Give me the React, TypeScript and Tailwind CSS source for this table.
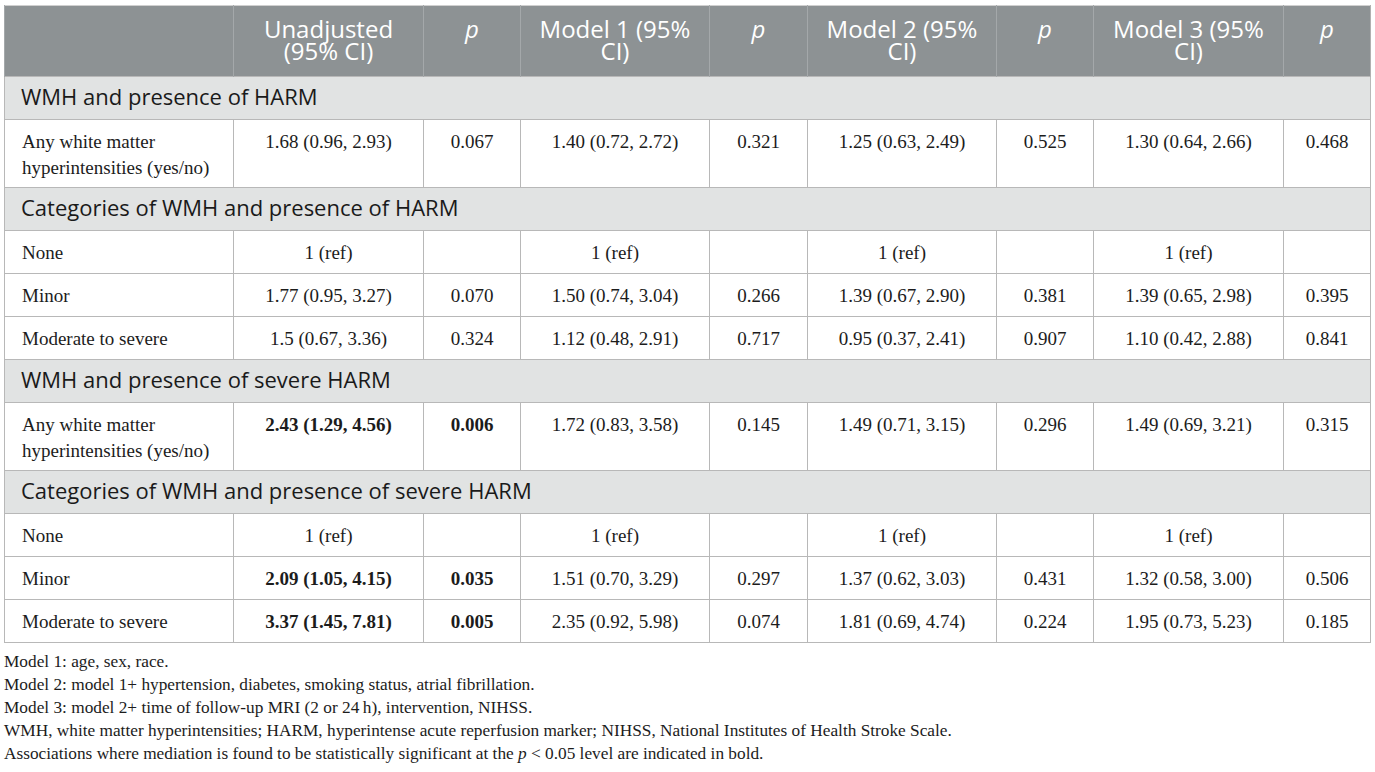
import React from "react";

type Cell = { v: string; b?: boolean };
type Row =
  | { kind: "section"; label: string }
  | { kind: "data"; label: React.ReactNode; two?: boolean; cells: Cell[] };

const c = (v: string, b?: boolean): Cell => ({ v, b });

const rows: Row[] = [
  { kind: "section", label: "WMH and presence of HARM" },
  {
    kind: "data",
    two: true,
    label: (
      <>
        Any white matter
        <br />
        hyperintensities (yes/no)
      </>
    ),
    cells: [c("1.68 (0.96, 2.93)"), c("0.067"), c("1.40 (0.72, 2.72)"), c("0.321"), c("1.25 (0.63, 2.49)"), c("0.525"), c("1.30 (0.64, 2.66)"), c("0.468")],
  },
  { kind: "section", label: "Categories of WMH and presence of HARM" },
  { kind: "data", label: "None", cells: [c("1 (ref)"), c(""), c("1 (ref)"), c(""), c("1 (ref)"), c(""), c("1 (ref)"), c("")] },
  { kind: "data", label: "Minor", cells: [c("1.77 (0.95, 3.27)"), c("0.070"), c("1.50 (0.74, 3.04)"), c("0.266"), c("1.39 (0.67, 2.90)"), c("0.381"), c("1.39 (0.65, 2.98)"), c("0.395")] },
  { kind: "data", label: "Moderate to severe", cells: [c("1.5 (0.67, 3.36)"), c("0.324"), c("1.12 (0.48, 2.91)"), c("0.717"), c("0.95 (0.37, 2.41)"), c("0.907"), c("1.10 (0.42, 2.88)"), c("0.841")] },
  { kind: "section", label: "WMH and presence of severe HARM" },
  {
    kind: "data",
    two: true,
    label: (
      <>
        Any white matter
        <br />
        hyperintensities (yes/no)
      </>
    ),
    cells: [c("2.43 (1.29, 4.56)", true), c("0.006", true), c("1.72 (0.83, 3.58)"), c("0.145"), c("1.49 (0.71, 3.15)"), c("0.296"), c("1.49 (0.69, 3.21)"), c("0.315")],
  },
  { kind: "section", label: "Categories of WMH and presence of severe HARM" },
  { kind: "data", label: "None", cells: [c("1 (ref)"), c(""), c("1 (ref)"), c(""), c("1 (ref)"), c(""), c("1 (ref)"), c("")] },
  { kind: "data", label: "Minor", cells: [c("2.09 (1.05, 4.15)", true), c("0.035", true), c("1.51 (0.70, 3.29)"), c("0.297"), c("1.37 (0.62, 3.03)"), c("0.431"), c("1.32 (0.58, 3.00)"), c("0.506")] },
  { kind: "data", label: "Moderate to severe", cells: [c("3.37 (1.45, 7.81)", true), c("0.005", true), c("2.35 (0.92, 5.98)"), c("0.074"), c("1.81 (0.69, 4.74)"), c("0.224"), c("1.95 (0.73, 5.23)"), c("0.185")] },
];

const widths = [229, 190, 97, 189, 98, 189, 97, 190, 87];

const sans = "font-['Open_Sans',_'Noto_Sans',_sans-serif]";
const serif = "font-['Liberation_Serif',_'Times_New_Roman',_serif]";

function HeadCell({ children, last }: { children?: React.ReactNode; last?: boolean }) {
  return (
    <th
      className={`h-[71px] align-top pt-[12px] px-1 text-center font-normal text-white text-[24px] leading-[22px] border-l border-[#a4a8aa] ${last ? "border-r border-r-[#b0b0b0]" : ""}`}
    >
      {children}
    </th>
  );
}

export default function App() {
  return (
    <div className={`bg-white w-[1375px] h-[772px] overflow-hidden pl-[4px] pt-[5px] text-[#1c1c1c] ${serif}`}>
      <table className="table-fixed border-collapse w-[1366px]">
        <colgroup>
          {widths.map((w, i) => (
            <col key={i} style={{ width: w }} />
          ))}
        </colgroup>
        <thead>
          <tr className={`bg-[#8d9294] border-t border-[#d0d0d0] ${sans}`}>
            <HeadCell />
            <HeadCell>
              Unadjusted
              <br />
              (95% CI)
            </HeadCell>
            <HeadCell>
              <i>p</i>
            </HeadCell>
            <HeadCell>
              Model 1 (95%
              <br />
              CI)
            </HeadCell>
            <HeadCell>
              <i>p</i>
            </HeadCell>
            <HeadCell>
              Model 2 (95%
              <br />
              CI)
            </HeadCell>
            <HeadCell>
              <i>p</i>
            </HeadCell>
            <HeadCell>
              Model 3 (95%
              <br />
              CI)
            </HeadCell>
            <HeadCell last>
              <i>p</i>
            </HeadCell>
          </tr>
        </thead>
        <tbody>
          {rows.map((r, i) =>
            r.kind === "section" ? (
              <tr key={i} className="bg-[#e1e3e3]">
                <td
                  colSpan={9}
                  className={`h-[43px] align-top pt-[6px] pl-[16px] text-[22px] leading-[26px] text-[#1a1a1a] border border-[#b8b8b8] ${sans}`}
                >
                  {r.label}
                </td>
              </tr>
            ) : (
              <tr key={i}>
                <td
                  className={`${r.two ? "h-[68px]" : "h-[43px]"} align-top pt-[9px] pl-[17px] text-[19px] leading-[26px] border border-[#b8b8b8]`}
                >
                  {r.label}
                </td>
                {r.cells.map((cell, j) => (
                  <td
                    key={j}
                    className={`align-top pt-[9px] text-center text-[19px] leading-[26px] border border-[#b8b8b8] ${cell.b ? "font-bold" : ""}`}
                  >
                    {cell.v}
                  </td>
                ))}
              </tr>
            )
          )}
        </tbody>
      </table>
      <div className="mt-[7px] text-[17.3px] leading-[23px] text-[#1c1c1c]">
        <p>Model 1: age, sex, race.</p>
        <p>Model 2: model 1+ hypertension, diabetes, smoking status, atrial fibrillation.</p>
        <p>Model 3: model 2+ time of follow-up MRI (2 or 24&#8201;h), intervention, NIHSS.</p>
        <p>WMH, white matter hyperintensities; HARM, hyperintense acute reperfusion marker; NIHSS, National Institutes of Health Stroke Scale.</p>
        <p>
          Associations where mediation is found to be statistically significant at the <i>p</i> &lt; 0.05 level are indicated in bold.
        </p>
      </div>
    </div>
  );
}
